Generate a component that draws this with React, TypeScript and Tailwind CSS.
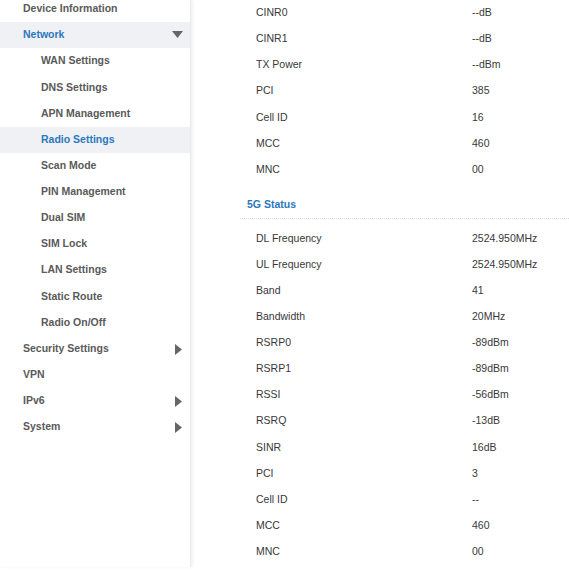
import React from 'react';

type NavItem = {
  label: string;
  sub?: boolean;
  active?: boolean;
  highlight?: boolean;
  arrow?: 'down' | 'right';
};

const navItems: NavItem[] = [
  { label: 'Device Information' },
  { label: 'Network', active: true, highlight: true, arrow: 'down' },
  { label: 'WAN Settings', sub: true },
  { label: 'DNS Settings', sub: true },
  { label: 'APN Management', sub: true },
  { label: 'Radio Settings', sub: true, active: true, highlight: true },
  { label: 'Scan Mode', sub: true },
  { label: 'PIN Management', sub: true },
  { label: 'Dual SIM', sub: true },
  { label: 'SIM Lock', sub: true },
  { label: 'LAN Settings', sub: true },
  { label: 'Static Route', sub: true },
  { label: 'Radio On/Off', sub: true },
  { label: 'Security Settings', arrow: 'right' },
  { label: 'VPN' },
  { label: 'IPv6', arrow: 'right' },
  { label: 'System', arrow: 'right' },
];

const lteRows: [string, string][] = [
  ['CINR0', '--dB'],
  ['CINR1', '--dB'],
  ['TX Power', '--dBm'],
  ['PCI', '385'],
  ['Cell ID', '16'],
  ['MCC', '460'],
  ['MNC', '00'],
];

const nrRows: [string, string][] = [
  ['DL Frequency', '2524.950MHz'],
  ['UL Frequency', '2524.950MHz'],
  ['Band', '41'],
  ['Bandwidth', '20MHz'],
  ['RSRP0', '-89dBm'],
  ['RSRP1', '-89dBm'],
  ['RSSI', '-56dBm'],
  ['RSRQ', '-13dB'],
  ['SINR', '16dB'],
  ['PCI', '3'],
  ['Cell ID', '--'],
  ['MCC', '460'],
  ['MNC', '00'],
];

function Arrow({ dir }: { dir: 'down' | 'right' }) {
  if (dir === 'down') {
    return (
      <svg width="11" height="7" viewBox="0 0 11 7" className="absolute right-[7px] top-[9px]">
        <path d="M0 0 H11 L5.5 7 Z" fill="#666" />
      </svg>
    );
  }
  return (
    <svg width="7" height="11" viewBox="0 0 7 11" className="absolute right-[8px] top-[8px]">
      <path d="M0 0 L7 5.5 L0 11 Z" fill="#666" />
    </svg>
  );
}

function StatusRow({ label, value }: { label: string; value: string }) {
  return (
    <div className="flex h-[26.1px] items-center text-[10.5px] text-[#383838]">
      <span className="w-[281px] pl-[65px]">{label}</span>
      <span>{value}</span>
    </div>
  );
}

export default function App() {
  return (
    <div
      className="flex h-[574px] w-[569px] overflow-hidden bg-white"
      style={{ fontFamily: '"Liberation Sans", Arial, sans-serif' }}
    >
      {/* Sidebar */}
      <div className="relative h-[567px] w-[191px] shrink-0 border-r border-[#ececec] shadow-[2px_0_3px_rgba(0,0,0,0.06)]">
        <div className="-mt-[4px]">
          {navItems.map((item) => (
            <div
              key={item.label}
              className={`relative flex h-[26.125px] items-center text-[10.5px] font-bold ${
                item.sub ? 'pl-[41px]' : 'pl-[23px]'
              } ${item.highlight ? 'bg-[#f0f1f4]' : ''} ${item.active ? 'text-[#2a78bd]' : 'text-[#5a5a5a]'}`}
            >
              {item.label}
              {item.arrow && <Arrow dir={item.arrow} />}
            </div>
          ))}
        </div>
      </div>

      {/* Content */}
      <div className="flex-1">
        <div>
          {lteRows.map(([l, v]) => (
            <StatusRow key={'lte' + l} label={l} value={v} />
          ))}
        </div>
        <div className="mt-[15px] pl-[56px] text-[10.5px] font-bold leading-[12px] text-[#2a78bd]">5G Status</div>
        <div className="ml-[49px] mt-[8px] mb-[7px] border-t border-dotted border-[#d8d8d8]" />
        {nrRows.map(([l, v]) => (
          <StatusRow key={'nr' + l} label={l} value={v} />
        ))}
      </div>
    </div>
  );
}
